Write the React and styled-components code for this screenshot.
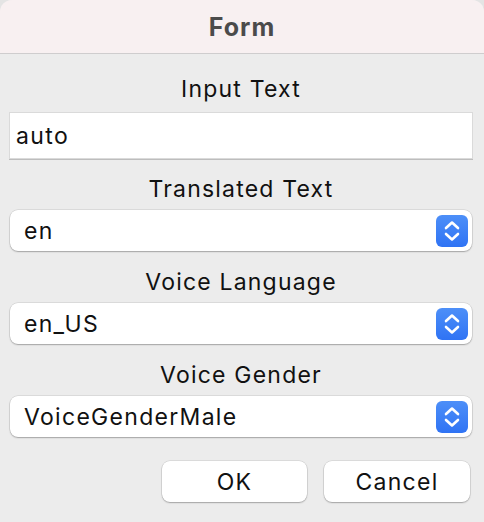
import React, { useState } from "react";
import styled, { createGlobalStyle } from "styled-components";

const GlobalStyle = createGlobalStyle`
  html, body {
    margin: 0;
    padding: 0;
    background: #e4e4e4;
  }
  body {
    font-family: Inter, "Liberation Sans", sans-serif;
  }
`;

const Window = styled.div`
  width: 484px;
  height: 522px;
  background: #ececec;
  border-radius: 12px 12px 0 0;
  overflow: hidden;
  display: flex;
  flex-direction: column;
`;

const TitleBar = styled.div`
  height: 53px;
  flex-shrink: 0;
  background: #f8f0f1;
  border-bottom: 1px solid #cfcdce;
  display: flex;
  align-items: center;
  justify-content: center;
  font-size: 25px;
  font-weight: 700;
  letter-spacing: 1px;
  color: #4b4b4b;
`;

const Body = styled.div`
  display: flex;
  flex-direction: column;
  padding: 21px 12px 0 10px;
`;

const Label = styled.div`
  height: 28px;
  line-height: 28px;
  margin-top: ${(p) => (p.$first ? "0" : "17px")};
  margin-bottom: 7px;
  text-align: center;
  font-size: 23px;
  letter-spacing: 1.2px;
  color: #111;
`;

const TextInput = styled.input`
  box-sizing: border-box;
  height: 45px;
  margin-top: 3px;
  width: 100%;
  border: none;
  outline: none;
  background: #fff;
  box-shadow: 0 0 0 1px #dadada, 0 1px 0 1px #bdbdbd;
  padding: 0 6px;
  font-family: inherit;
  font-size: 23px;
  letter-spacing: 1.4px;
  color: #111;
`;

const Select = styled.div`
  box-sizing: border-box;
  height: 41px;
  background: #fff;
  border-radius: 8px;
  box-shadow: 0 0 0 0.5px rgba(0, 0, 0, 0.14), 0 1px 1.5px rgba(0, 0, 0, 0.25);
  display: flex;
  align-items: center;
  justify-content: space-between;
  padding: 0 4px 0 14px;
  font-size: 23px;
  letter-spacing: 1.3px;
  color: #111;
`;

const Stepper = styled.div`
  width: 32px;
  height: 32px;
  border-radius: 6px;
  background: linear-gradient(#4d8ff8, #2f73f4);
  display: flex;
  align-items: center;
  justify-content: center;
`;

const Buttons = styled.div`
  display: flex;
  justify-content: flex-end;
  gap: 17px;
  margin-top: 24px;
  padding-right: 2px;
`;

const Button = styled.button`
  width: ${(p) => p.$w}px;
  height: 41px;
  border: none;
  border-radius: 8px;
  background: #fff;
  box-shadow: 0 0 0 0.5px rgba(0, 0, 0, 0.14), 0 1px 1.5px rgba(0, 0, 0, 0.25);
  font-family: inherit;
  font-size: 23px;
  letter-spacing: 1.3px;
  color: #111;
  padding: 0;
`;

const StepperIcon = () => (
  <svg width="20" height="26" viewBox="0 0 20 26">
    <path
      d="M4 10 L10 4.5 L16 10 M4 16 L10 21.5 L16 16"
      fill="none"
      stroke="#fff"
      strokeWidth="2.6"
      strokeLinecap="round"
      strokeLinejoin="round"
    />
  </svg>
);

const PopUp = ({ value }) => (
  <Select>
    <span>{value}</span>
    <Stepper>
      <StepperIcon />
    </Stepper>
  </Select>
);

const App = () => {
  const [text, setText] = useState("auto");

  return (
    <Window>
      <GlobalStyle />
      <TitleBar>Form</TitleBar>
      <Body>
        <Label $first>Input Text</Label>
        <TextInput value={text} onChange={(e) => setText(e.target.value)} />
        <Label>Translated Text</Label>
        <PopUp value="en" />
        <Label>Voice Language</Label>
        <PopUp value="en_US" />
        <Label>Voice Gender</Label>
        <PopUp value="VoiceGenderMale" />
        <Buttons>
          <Button $w={145}>OK</Button>
          <Button $w={146}>Cancel</Button>
        </Buttons>
      </Body>
    </Window>
  );
};

export default App;
